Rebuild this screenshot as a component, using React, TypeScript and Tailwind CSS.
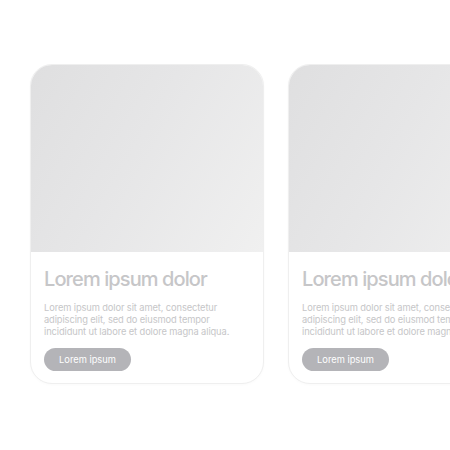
import React from "react";

function Card() {
  return (
    <div className="w-[234px] h-[320px] shrink-0 rounded-[22px] border border-[#efefef] bg-white overflow-hidden flex flex-col shadow-[0_1px_3px_rgba(0,0,0,0.025)]">
      <div className="h-[187px] bg-[linear-gradient(120deg,#dfdfe0_0%,#e6e6e7_45%,#f0f0f0_100%)]" />
      <div className="px-[13px] pt-[15px] flex flex-col">
        <div className="text-[20px] leading-[24px] text-[#c6c6c8] font-medium tracking-[-0.9px] whitespace-nowrap">
          Lorem ipsum dolor
        </div>
        <p className="mt-[11px] text-[9.3px] leading-[12px] text-[#c6c6c8] tracking-[-0.1px] whitespace-nowrap">
          Lorem ipsum dolor sit amet, consectetur
          <br />
          adipiscing elit, sed do eiusmod tempor
          <br />
          incididunt ut labore et dolore magna aliqua.
        </p>
        <div className="mt-[10px] w-[87px] h-[23px] rounded-full bg-[#b4b4b8] text-white text-[9.3px] flex items-center justify-center">
          Lorem ipsum
        </div>
      </div>
    </div>
  );
}

export default function App() {
  return (
    <div
      className="w-[450px] h-[450px] bg-white overflow-hidden pt-[64px] pl-[30px] flex gap-[24px]"
      style={{ fontFamily: "Inter, 'Noto Sans', sans-serif" }}
    >
      <Card />
      <Card />
    </div>
  );
}
